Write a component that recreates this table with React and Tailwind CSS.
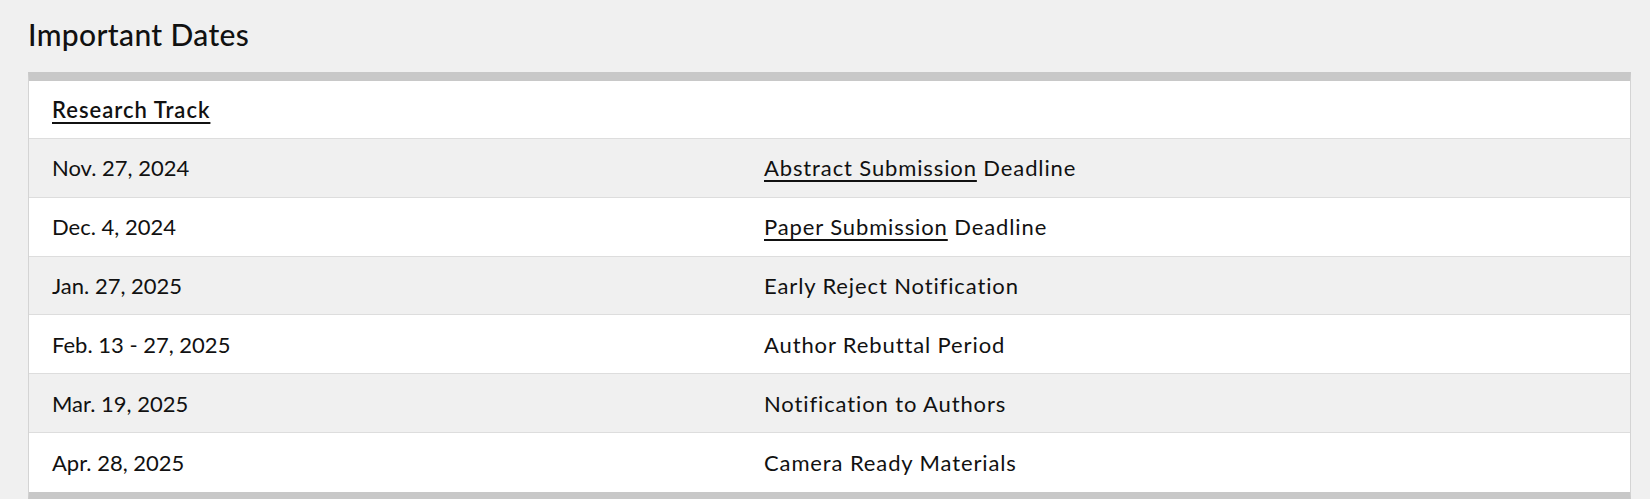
import React from "react";

const rows = [
  { date: "Nov. 27, 2024", link: "Abstract Submission", rest: " Deadline", shade: true },
  { date: "Dec. 4, 2024", link: "Paper Submission", rest: " Deadline", shade: false },
  { date: "Jan. 27, 2025", text: "Early Reject Notification", shade: true },
  { date: "Feb. 13 - 27, 2025", text: "Author Rebuttal Period", shade: false },
  { date: "Mar. 19, 2025", text: "Notification to Authors", shade: true },
  { date: "Apr. 28, 2025", text: "Camera Ready Materials", shade: false },
];

export default function App() {
  return (
    <div
      className="min-h-[499px] bg-[#f0f0f0] text-[#111111] pl-[28px] pr-[19px] pt-[14px]"
      style={{ fontFamily: "Lato, 'Open Sans', sans-serif" }}
    >
      <h2 className="text-[30px] leading-[40px] font-medium tracking-[0.012em] mb-[18px]">Important Dates</h2>
      <div className="border-t-[9px] border-[#c8c8c8] border-b-[9px] border-x border-x-[#d4d4d4] bg-white">
        <div className="h-[58px] flex items-center px-[23px] border-b border-[#dddddd]">
          <a href="#" className="text-[22px] font-semibold tracking-[0.045em] underline underline-offset-[4px] decoration-[2px]">
            Research Track
          </a>
        </div>
        {rows.map((r, i) => (
          <div
            key={i}
            className={`grid grid-cols-[711px_1fr] h-[58.8px] items-center text-[22px] ${
              i < rows.length - 1 ? "border-b border-[#dddddd]" : ""
            } ${r.shade ? "bg-[#f0f0f0]" : "bg-white"}`}
          >
            <div className="pl-[23px]">{r.date}</div>
            <div className="pl-[24px] tracking-[0.04em]">
              {r.link ? (
                <>
                  <a href="#" className="underline underline-offset-[4px] decoration-[2px]">
                    {r.link}
                  </a>
                  {r.rest}
                </>
              ) : (
                r.text
              )}
            </div>
          </div>
        ))}
      </div>
    </div>
  );
}
